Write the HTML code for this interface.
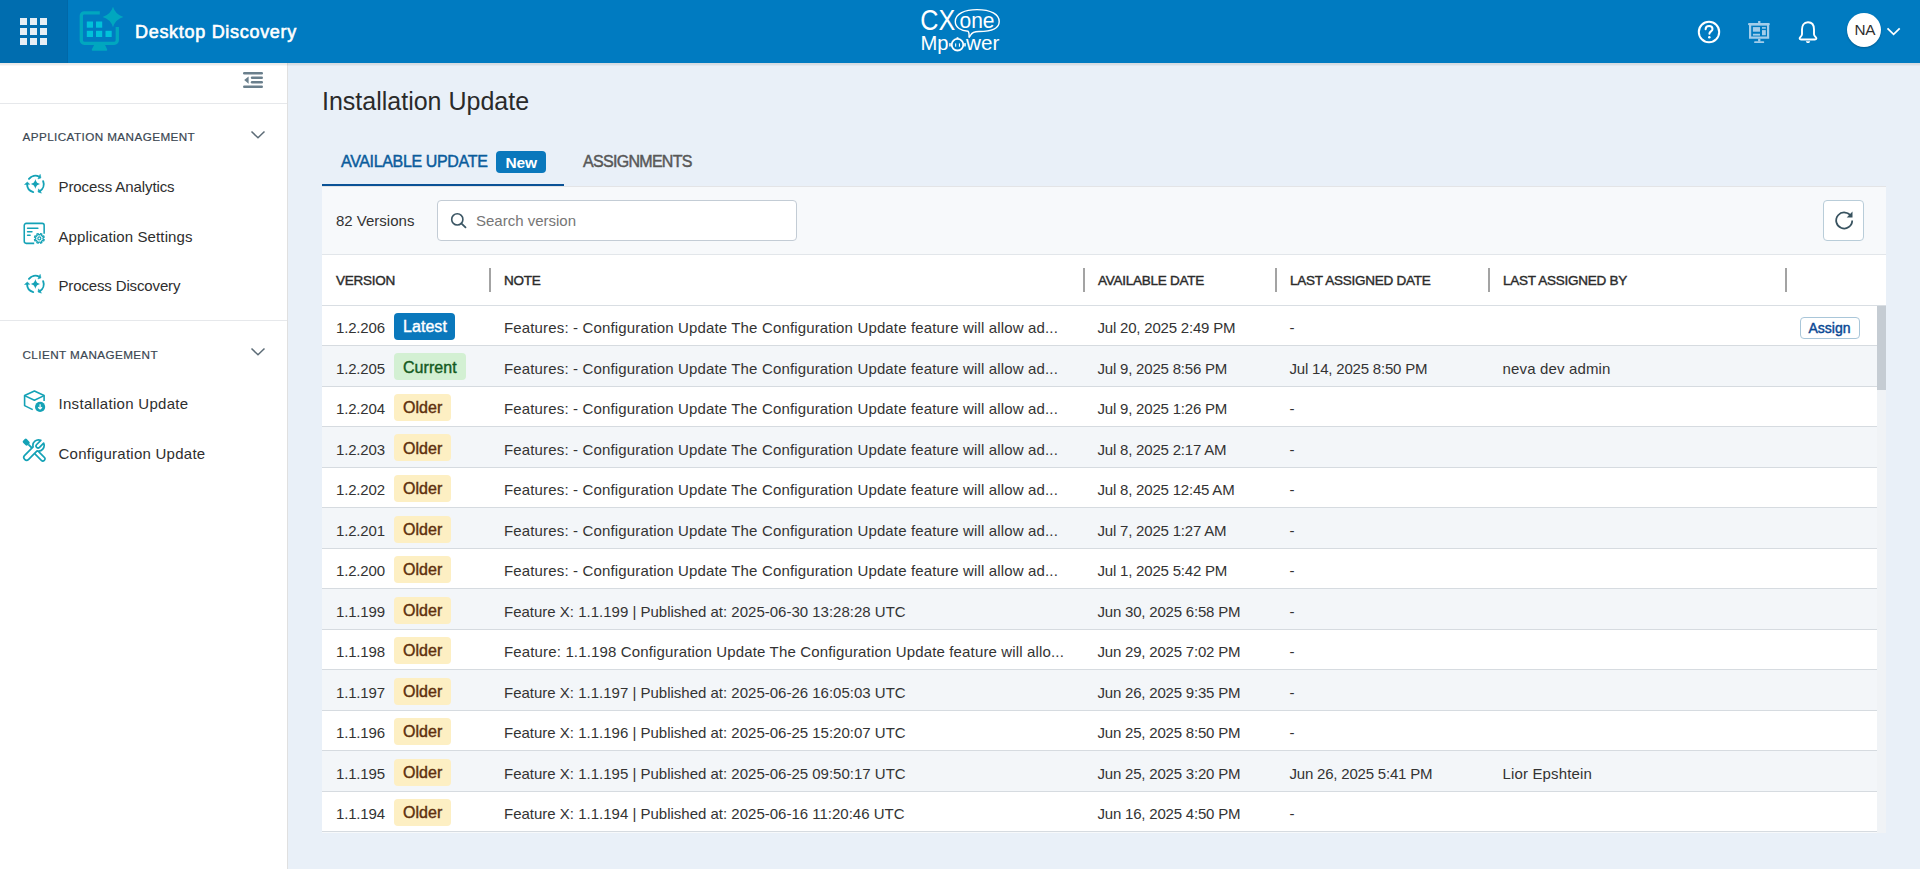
<!DOCTYPE html>
<html><head><meta charset="utf-8">
<style>
*{box-sizing:border-box;margin:0;padding:0}
html,body{width:1920px;height:869px;overflow:hidden;background:#e9f0f8;font-family:"Liberation Sans",sans-serif}
.a{position:absolute}
.t{position:absolute;white-space:nowrap}
</style></head><body>
<div class="a" style="left:0;top:0;width:1920px;height:63px;background:#007bc1;"></div>
<div class="a" style="left:0;top:0;width:68px;height:63px;background:#006daf;border-right:1px solid #0068a8"></div>
<div class="a" style="left:20px;top:18px;width:7px;height:7px;background:#e6eef5"></div>
<div class="a" style="left:30px;top:18px;width:7px;height:7px;background:#e6eef5"></div>
<div class="a" style="left:40px;top:18px;width:7px;height:7px;background:#e6eef5"></div>
<div class="a" style="left:20px;top:28px;width:7px;height:7px;background:#e6eef5"></div>
<div class="a" style="left:30px;top:28px;width:7px;height:7px;background:#e6eef5"></div>
<div class="a" style="left:40px;top:28px;width:7px;height:7px;background:#e6eef5"></div>
<div class="a" style="left:20px;top:38px;width:7px;height:7px;background:#e6eef5"></div>
<div class="a" style="left:30px;top:38px;width:7px;height:7px;background:#e6eef5"></div>
<div class="a" style="left:40px;top:38px;width:7px;height:7px;background:#e6eef5"></div>
<svg class="a" style="left:79px;top:6px" width="46" height="46" viewBox="0 0 46 46">
<path d="M20.8 6.8 H5.3 a3 3 0 0 0 -3 3 V34.3 a3 3 0 0 0 3 3 H35.3 a3 3 0 0 0 3 -3 V21" fill="none" stroke="#00a7bf" stroke-width="3.3"/>
<path d="M15.6 38 L12.8 43.6 a1 1 0 0 0 1 1.2 H27.2 a1 1 0 0 0 1 -1.2 L25.6 38Z" fill="#00a7bf"/>
<rect x="7.8" y="15.5" width="6.2" height="6.2" fill="#00c2d9"/>
<rect x="17" y="15.5" width="6.2" height="6.2" fill="#00c2d9"/>
<rect x="7.8" y="24.8" width="6.2" height="6.2" fill="#00c2d9"/>
<rect x="17" y="24.8" width="6.2" height="6.2" fill="#00c2d9"/>
<rect x="26.5" y="24.8" width="6.2" height="6.2" fill="#00c2d9"/>
<path d="M34 0.8 Q36.4 8.7 44.4 11 Q36.4 13.3 34 21.2 Q31.6 13.3 23.6 11 Q31.6 8.7 34 0.8Z" fill="#00a7bf"/>
</svg>
<div class="t" style="left:135px;top:21.26px;font-size:18px;line-height:23px;color:#ffffff;font-weight:400;letter-spacing:0.7px;-webkit-text-stroke:0.6px #fff">Desktop Discovery</div>
<svg class="a" style="left:915px;top:5px" width="92" height="52" viewBox="0 0 92 52">
<text x="5.2" y="25.2" font-family="Liberation Sans" font-size="29" fill="#fff" textLength="35" lengthAdjust="spacingAndGlyphs">CX</text>
<path d="M53 26.3 C46 25.8 40.3 22.5 40.3 16.5 C40.3 8.5 50 4.6 62 4.6 C76 4.6 84.2 9.5 84.2 16.5 C84.2 23.5 76 26.5 64 26.5 C60 26.5 57 27.3 55.5 30.3 L54 32.6 C54.2 30.3 54 27.3 53 26.3Z" fill="none" stroke="#fff" stroke-width="1.4"/>
<text x="44.5" y="23" font-family="Liberation Sans" font-size="21.5" fill="#fff" textLength="35" lengthAdjust="spacingAndGlyphs">one</text>
<text x="5.5" y="44.9" font-family="Liberation Sans" font-size="20.5" fill="#fff" textLength="28" lengthAdjust="spacingAndGlyphs">Mp</text>
<circle cx="42.5" cy="39.7" r="5.8" fill="none" stroke="#fff" stroke-width="1.8"/>
<rect x="34.2" y="38" width="1.6" height="3.6" rx=".6" fill="#fff"/>
<rect x="49.2" y="38" width="1.6" height="3.6" rx=".6" fill="#fff"/>
<rect x="41.6" y="32.2" width="1.8" height="1.8" fill="#fff"/>
<rect x="40.1" y="38.3" width="1.1" height="3.4" rx=".5" fill="#fff"/>
<rect x="43.9" y="38.3" width="1.1" height="3.4" rx=".5" fill="#fff"/>
<text x="51" y="44.9" font-family="Liberation Sans" font-size="20.5" fill="#fff" textLength="33.3" lengthAdjust="spacingAndGlyphs">wer</text>
</svg>
<svg class="a" style="left:1696px;top:19px" width="26" height="26" viewBox="0 0 26 26">
<circle cx="13" cy="13" r="10.2" fill="none" stroke="#fff" stroke-width="2"/>
<path d="M9.6 10.2 C9.6 8 11.2 6.9 13.1 6.9 C15 6.9 16.5 8.1 16.5 9.9 C16.5 12.3 13.4 12.4 13.4 14.8" fill="none" stroke="#fff" stroke-width="2" stroke-linecap="round"/>
<circle cx="13.3" cy="18.3" r="1.25" fill="#fff"/>
</svg>
<svg class="a" style="left:1746px;top:19px" width="26" height="26" viewBox="0 0 26 26">
<g fill="#a3cdea">
<rect x="12.1" y="2" width="2.3" height="2.4"/>
<rect x="2" y="4" width="21.8" height="2.2" rx="1"/>
<path fill-rule="evenodd" d="M3 6 H23.2 V19.8 H3Z M5.2 6.6 V17.6 H21 V6.6Z"/>
<rect x="6.9" y="8.1" width="7.1" height="4.6"/>
<rect x="6.9" y="14.75" width="7.1" height="1.85"/>
<rect x="16" y="8.1" width="3.8" height="1.6"/>
<rect x="16" y="11.1" width="3.8" height="5.1"/>
<rect x="12.1" y="19.8" width="2.3" height="2.8"/>
<rect x="8.1" y="22.2" width="10.1" height="1.9" rx=".9"/>
</g>
</svg>
<svg class="a" style="left:1795px;top:19px" width="26" height="26" viewBox="0 0 26 26">
<path d="M13 3.2 C8.6 3.2 7 6.8 7 10.4 V15.2 C7 17.2 4.6 18.2 4.6 19.3 C4.6 20.1 5.2 20.5 6 20.5 H20 C20.8 20.5 21.4 20.1 21.4 19.3 C21.4 18.2 19 17.2 19 15.2 V10.4 C19 6.8 17.4 3.2 13 3.2Z" fill="none" stroke="#fff" stroke-width="1.9" stroke-linejoin="round"/>
<path d="M10.8 22.2 C11.3 23.6 12.1 24.1 13 24.1 C13.9 24.1 14.7 23.6 15.2 22.2Z" fill="#fff"/>
</svg>
<div class="a" style="left:1847px;top:13px;width:34px;height:34px;border-radius:50%;background:#fff;box-shadow:0 1px 2px rgba(0,0,0,.25)"></div>
<div class="t" style="left:1854.5px;top:20.30px;font-size:15.3px;line-height:20px;color:#2e2e2e;font-weight:400;letter-spacing:-0.2px">NA</div>
<svg class="a" style="left:1886px;top:26px" width="16" height="12" viewBox="0 0 16 12">
<path d="M1.5 2.3 L7.6 8.4 L13.7 2.3" fill="none" stroke="#fff" stroke-width="1.7"/>
</svg>
<div class="a" style="left:0;top:63px;width:288px;height:806px;background:#fff;border-right:1px solid #e0e0e0"></div>
<div class="a" style="left:0;top:103px;width:287px;height:1px;background:#e6e8eb"></div>
<div class="a" style="left:0;top:63px;width:1920px;height:1px;background:rgba(70,45,30,.105)"></div><div class="a" style="left:0;top:64px;width:1920px;height:1px;background:rgba(0,0,0,.075)"></div><div class="a" style="left:0;top:65px;width:1920px;height:1px;background:rgba(0,0,0,.03)"></div>
<div class="a" style="left:0;top:320px;width:287px;height:1px;background:#e6e8eb"></div>
<svg class="a" style="left:243px;top:72px" width="21" height="17" viewBox="0 0 21 17">
<g fill="#6a7f8c">
<rect x="0" y="0" width="20" height="2.4" rx="1.2"/>
<rect x="7.8" y="4.5" width="12.2" height="2.4" rx="1.2"/>
<rect x="7.8" y="9.1" width="12.2" height="2.4" rx="1.2"/>
<rect x="0" y="13.6" width="20" height="2.4" rx="1.2"/>
<path d="M5.6 4.5 V11.8 L1.2 8.1Z"/>
</g>
</svg>
<div class="t" style="left:22.5px;top:129.45px;font-size:11.7px;line-height:15px;color:#3b4752;font-weight:400;letter-spacing:0.42px;-webkit-text-stroke:0.2px #3b4752">APPLICATION MANAGEMENT</div>
<div class="t" style="left:22.5px;top:346.85px;font-size:11.7px;line-height:15px;color:#3b4752;font-weight:400;letter-spacing:0.42px;-webkit-text-stroke:0.2px #3b4752">CLIENT MANAGEMENT</div>
<svg class="a" style="left:250px;top:130px" width="16" height="10" viewBox="0 0 16 10">
<path d="M1.5 1.5 L8 7.8 L14.5 1.5" fill="none" stroke="#5d6c77" stroke-width="1.5"/>
</svg>
<svg class="a" style="left:250px;top:347px" width="16" height="10" viewBox="0 0 16 10">
<path d="M1.5 1.5 L8 7.8 L14.5 1.5" fill="none" stroke="#5d6c77" stroke-width="1.5"/>
</svg>
<svg class="a" style="left:22px;top:172px" width="26" height="24" viewBox="0 0 26 24">
<path d="M6.95 6.88 A8.3 8.3 0 0 1 17.30 4.77" fill="none" stroke="#14a2b6" stroke-width="1.9" stroke-linecap="round"/>
<path d="M18.95 5.93 L15.90 6.98 L18.18 2.30Z" fill="#14a2b6" stroke="#14a2b6" stroke-width="0.5" stroke-linejoin="round"/>
<path d="M21.15 9.13 A8.3 8.3 0 0 1 17.80 19.14" fill="none" stroke="#14a2b6" stroke-width="1.9" stroke-linecap="round"/>
<path d="M15.96 19.99 L16.59 16.83 L19.50 21.14Z" fill="#14a2b6" stroke="#14a2b6" stroke-width="0.5" stroke-linejoin="round"/>
<path d="M11.25 20.12 A8.3 8.3 0 0 1 5.10 12.10" fill="none" stroke="#14a2b6" stroke-width="1.9" stroke-linecap="round"/>
<path d="M5.35 10.09 L7.70 12.30 L2.51 12.48Z" fill="#14a2b6" stroke="#14a2b6" stroke-width="0.5" stroke-linejoin="round"/>
<path d="M13.4 7.1 C14.25 10.40 15.10 11.25 18.4 12.1 C15.10 12.95 14.25 13.80 13.4 17.1 C12.55 13.80 11.70 12.95 8.4 12.1 C11.70 11.25 12.55 10.40 13.4 7.1Z" fill="#14a2b6"/>
</svg>
<div class="t" style="left:58.5px;top:176.50px;font-size:15px;line-height:20px;color:#2e2e2e;font-weight:400;letter-spacing:-0.09px">Process Analytics</div>
<svg class="a" style="left:22px;top:222px" width="24" height="24" viewBox="0 0 24 24">
<path d="M12.2 21.35 H4.25 a2 2 0 0 1 -2 -2 V3.35 a2 2 0 0 1 2 -2 H20.15 a2 2 0 0 1 2 2 V11.8" fill="none" stroke="#14a2b6" stroke-width="1.55"/>
<rect x="4.8" y="5.6" width="11.8" height="1.5" rx=".75" fill="#14a2b6"/>
<rect x="4.8" y="9" width="5.9" height="1.5" rx=".75" fill="#14a2b6"/>
<rect x="4.8" y="12.4" width="4.1" height="1.5" rx=".75" fill="#14a2b6"/>
<path d="M20.99 17.07 L22.19 17.65 L21.66 18.94 L20.40 18.50 L19.45 19.45 L19.89 20.71 L18.60 21.24 L18.02 20.04 L16.68 20.04 L16.10 21.24 L14.81 20.71 L15.25 19.45 L14.30 18.50 L13.04 18.94 L12.51 17.65 L13.71 17.07 L13.71 15.73 L12.51 15.15 L13.04 13.86 L14.30 14.30 L15.25 13.35 L14.81 12.09 L16.10 11.56 L16.68 12.76 L18.02 12.76 L18.60 11.56 L19.89 12.09 L19.45 13.35 L20.40 14.30 L21.66 13.86 L22.19 15.15 L20.99 15.73Z" fill="#fff" stroke="#14a2b6" stroke-width="1.3" stroke-linejoin="round"/>
<circle cx="17.35" cy="16.4" r="1.5" fill="none" stroke="#14a2b6" stroke-width="1.2"/>
</svg>
<div class="t" style="left:58.5px;top:226.80px;font-size:15px;line-height:20px;color:#2e2e2e;font-weight:400;letter-spacing:0.12px">Application Settings</div>
<svg class="a" style="left:22px;top:272px" width="26" height="24" viewBox="0 0 26 24">
<path d="M6.95 6.88 A8.3 8.3 0 0 1 17.30 4.77" fill="none" stroke="#14a2b6" stroke-width="1.9" stroke-linecap="round"/>
<path d="M18.95 5.93 L15.90 6.98 L18.18 2.30Z" fill="#14a2b6" stroke="#14a2b6" stroke-width="0.5" stroke-linejoin="round"/>
<path d="M21.15 9.13 A8.3 8.3 0 0 1 17.80 19.14" fill="none" stroke="#14a2b6" stroke-width="1.9" stroke-linecap="round"/>
<path d="M15.96 19.99 L16.59 16.83 L19.50 21.14Z" fill="#14a2b6" stroke="#14a2b6" stroke-width="0.5" stroke-linejoin="round"/>
<path d="M11.25 20.12 A8.3 8.3 0 0 1 5.10 12.10" fill="none" stroke="#14a2b6" stroke-width="1.9" stroke-linecap="round"/>
<path d="M5.35 10.09 L7.70 12.30 L2.51 12.48Z" fill="#14a2b6" stroke="#14a2b6" stroke-width="0.5" stroke-linejoin="round"/>
<path d="M13.4 7.1 C14.25 10.40 15.10 11.25 18.4 12.1 C15.10 12.95 14.25 13.80 13.4 17.1 C12.55 13.80 11.70 12.95 8.4 12.1 C11.70 11.25 12.55 10.40 13.4 7.1Z" fill="#14a2b6"/>
</svg>
<div class="t" style="left:58.5px;top:275.80px;font-size:15px;line-height:20px;color:#2e2e2e;font-weight:400;letter-spacing:-0.14px">Process Discovery</div>
<svg class="a" style="left:22px;top:389px" width="24" height="24" viewBox="0 0 24 24">
<path d="M10.7 20.6 L2.6 16.6 V6.6 L12.4 2.1 L22.1 6.6 V11.9" fill="none" stroke="#14a2b6" stroke-width="1.6" stroke-linejoin="round"/>
<path d="M2.6 6.6 L12.4 11.3 L22.1 6.6" fill="none" stroke="#14a2b6" stroke-width="1.6" stroke-linejoin="round"/>
<circle cx="18.1" cy="17.9" r="5.1" fill="#14a2b6"/>
<path d="M18.1 15.2 V19.6 M16.2 18.2 L18.1 19.9 L20 18.2" fill="none" stroke="#fff" stroke-width="1.2"/>
</svg>
<div class="t" style="left:58.5px;top:393.50px;font-size:15px;line-height:20px;color:#2e2e2e;font-weight:400;letter-spacing:0.3px">Installation Update</div>
<svg class="a" style="left:22px;top:438px" width="24" height="24" viewBox="0 0 24 24">
<g transform="rotate(45 12 12)">
<rect x="-2.2" y="9.4" width="6.4" height="5.2" rx="1.4" fill="#14a2b6"/>
<rect x="4" y="11.1" width="8" height="1.8" fill="#14a2b6"/>
<rect x="14" y="9.9" width="12.6" height="4.2" rx="2.1" fill="#fff" stroke="#14a2b6" stroke-width="1.6"/>
</g>
<g transform="rotate(-45 12 12)">
<path d="M1.6 9.2 L13.55 9.2 A5.6 5.6 0 0 1 23.63 10 L17.8 10 A2 2 0 0 0 17.8 14 L23.63 14 A5.6 5.6 0 0 1 13.55 14.8 L1.6 14.8 A2.8 2.8 0 0 1 1.6 9.2Z" fill="#fff" stroke="#14a2b6" stroke-width="1.7" stroke-linejoin="round"/>
</g>
</svg>
<div class="t" style="left:58.5px;top:443.80px;font-size:15px;line-height:20px;color:#2e2e2e;font-weight:400;letter-spacing:0.26px">Configuration Update</div>
<div class="t" style="left:322px;top:85.34px;font-size:25px;line-height:32px;color:#2a2a2a;font-weight:400;">Installation Update</div>
<div class="t" style="left:341px;top:150.96px;font-size:16px;line-height:21px;color:#0b5c9c;font-weight:400;letter-spacing:-0.35px;-webkit-text-stroke:0.45px #0b5c9c">AVAILABLE UPDATE</div>
<div class="a" style="left:496px;top:151px;width:50px;height:22px;border-radius:4px;background:#0a78bc"></div>
<div class="t" style="left:505.5px;top:152.83px;font-size:15.5px;line-height:20px;color:#ffffff;font-weight:700;letter-spacing:-0.1px">New</div>
<div class="t" style="left:583px;top:150.96px;font-size:16px;line-height:21px;color:#585858;font-weight:400;letter-spacing:-0.7px;-webkit-text-stroke:0.45px #585858">ASSIGNMENTS</div>
<div class="a" style="left:322px;top:186px;width:1564px;height:647px;background:#f7f9fb"></div>
<div class="a" style="left:322px;top:186px;width:1564px;height:1px;background:#e3e4e6"></div>
<div class="a" style="left:322px;top:183.6px;width:242px;height:2.4px;background:#0a5296"></div>
<div class="a" style="left:322px;top:254px;width:1564px;height:1px;background:#e2e6ea"></div>
<div class="t" style="left:336px;top:210.80px;font-size:15px;line-height:20px;color:#333;font-weight:400;">82 Versions</div>
<div class="a" style="left:437px;top:200px;width:360px;height:41px;border:1px solid #c3ccd5;border-radius:4px;background:#fff"></div>
<svg class="a" style="left:449px;top:211px" width="20" height="20" viewBox="0 0 20 20">
<circle cx="8.3" cy="8.4" r="5.6" fill="none" stroke="#3b5664" stroke-width="1.6"/>
<path d="M12.3 12.4 L16.5 16.4" stroke="#3b5664" stroke-width="1.8" stroke-linecap="round"/>
</svg>
<div class="t" style="left:476px;top:210.80px;font-size:15px;line-height:20px;color:#767676;font-weight:400;">Search version</div>
<div class="a" style="left:1823px;top:200px;width:41px;height:41px;border:1px solid #b9cdd9;border-radius:4px;background:#fff"></div>
<svg class="a" style="left:1832px;top:208px" width="24" height="24" viewBox="0 0 24 24">
<path d="M19.2 8.6 A8 8 0 1 0 20.2 12.5" fill="none" stroke="#38525f" stroke-width="1.75"/>
<path d="M20.5 3.6 V9.4 H14.7Z" fill="#38525f"/>
</svg>
<div class="a" style="left:322px;top:255px;width:1564px;height:50px;background:#fff"></div>
<div class="a" style="left:322px;top:305px;width:1564px;height:1px;background:#d9dee3"></div>
<div class="t" style="left:336px;top:271.52px;font-size:13.5px;line-height:18px;color:#2b2b2b;font-weight:400;letter-spacing:-0.25px;-webkit-text-stroke:0.4px #2b2b2b">VERSION</div>
<div class="t" style="left:504px;top:271.52px;font-size:13.5px;line-height:18px;color:#2b2b2b;font-weight:400;letter-spacing:-0.25px;-webkit-text-stroke:0.4px #2b2b2b">NOTE</div>
<div class="t" style="left:1098px;top:271.52px;font-size:13.5px;line-height:18px;color:#2b2b2b;font-weight:400;letter-spacing:-0.25px;-webkit-text-stroke:0.4px #2b2b2b">AVAILABLE DATE</div>
<div class="t" style="left:1290px;top:271.52px;font-size:13.5px;line-height:18px;color:#2b2b2b;font-weight:400;letter-spacing:-0.25px;-webkit-text-stroke:0.4px #2b2b2b">LAST ASSIGNED DATE</div>
<div class="t" style="left:1503px;top:271.52px;font-size:13.5px;line-height:18px;color:#2b2b2b;font-weight:400;letter-spacing:-0.25px;-webkit-text-stroke:0.4px #2b2b2b">LAST ASSIGNED BY</div>
<div class="a" style="left:489px;top:268px;width:2px;height:24px;background:#a3a3a3"></div>
<div class="a" style="left:1083px;top:268px;width:2px;height:24px;background:#a3a3a3"></div>
<div class="a" style="left:1275px;top:268px;width:2px;height:24px;background:#a3a3a3"></div>
<div class="a" style="left:1488px;top:268px;width:2px;height:24px;background:#a3a3a3"></div>
<div class="a" style="left:1785px;top:268px;width:2px;height:24px;background:#a3a3a3"></div>
<div class="a" style="left:322px;top:306px;width:1555px;height:39px;background:#ffffff"></div>
<div class="a" style="left:322px;top:345px;width:1555px;height:1px;background:#d6dbe0"></div>
<div class="t" style="left:336px;top:318.45px;font-size:15px;line-height:20px;color:#333;font-weight:400;letter-spacing:-0.17px">1.2.206</div>
<div class="a" style="left:394px;top:312.9px;width:61px;height:27px;border-radius:4px;background:#0a78bc"></div>
<div class="t" style="left:403px;top:316.01px;font-size:16px;line-height:21px;color:#ffffff;font-weight:400;letter-spacing:0.05px;-webkit-text-stroke:0.4px #ffffff">Latest</div>
<div class="t" style="left:504px;top:318.45px;font-size:15px;line-height:20px;color:#333;font-weight:400;letter-spacing:0.15px">Features: - Configuration Update The Configuration Update feature will allow ad...</div>
<div class="t" style="left:1097.5px;top:318.45px;font-size:15px;line-height:20px;color:#333;font-weight:400;letter-spacing:-0.2px">Jul 20, 2025 2:49 PM</div>
<div class="t" style="left:1289.5px;top:318.45px;font-size:15px;line-height:20px;color:#333;font-weight:400;letter-spacing:-0.2px">-</div>
<div class="a" style="left:1800px;top:316.8px;width:60px;height:22px;border:1px solid #a9c6d9;border-radius:4px;background:#fff"></div>
<div class="t" style="left:1808.5px;top:319.30px;font-size:14px;line-height:18px;color:#0a4894;font-weight:400;letter-spacing:0px;-webkit-text-stroke:0.45px #0a4894">Assign</div>
<div class="a" style="left:322px;top:346px;width:1555px;height:40px;background:#f3f6f9"></div>
<div class="a" style="left:322px;top:386px;width:1555px;height:1px;background:#d6dbe0"></div>
<div class="t" style="left:336px;top:358.95px;font-size:15px;line-height:20px;color:#333;font-weight:400;letter-spacing:-0.17px">1.2.205</div>
<div class="a" style="left:394px;top:353.4px;width:72px;height:27px;border-radius:4px;background:#d3f0d3"></div>
<div class="t" style="left:403px;top:356.51px;font-size:16px;line-height:21px;color:#145a1e;font-weight:400;letter-spacing:0.05px;-webkit-text-stroke:0.4px #145a1e">Current</div>
<div class="t" style="left:504px;top:358.95px;font-size:15px;line-height:20px;color:#333;font-weight:400;letter-spacing:0.15px">Features: - Configuration Update The Configuration Update feature will allow ad...</div>
<div class="t" style="left:1097.5px;top:358.95px;font-size:15px;line-height:20px;color:#333;font-weight:400;letter-spacing:-0.2px">Jul 9, 2025 8:56 PM</div>
<div class="t" style="left:1289.5px;top:358.95px;font-size:15px;line-height:20px;color:#333;font-weight:400;letter-spacing:-0.2px">Jul 14, 2025 8:50 PM</div>
<div class="t" style="left:1502.5px;top:358.95px;font-size:15px;line-height:20px;color:#333;font-weight:400;letter-spacing:0.15px">neva dev admin</div>
<div class="a" style="left:322px;top:387px;width:1555px;height:39px;background:#ffffff"></div>
<div class="a" style="left:322px;top:426px;width:1555px;height:1px;background:#d6dbe0"></div>
<div class="t" style="left:336px;top:399.45px;font-size:15px;line-height:20px;color:#333;font-weight:400;letter-spacing:-0.17px">1.2.204</div>
<div class="a" style="left:394px;top:393.9px;width:57px;height:27px;border-radius:4px;background:#fdefc3"></div>
<div class="t" style="left:403px;top:397.01px;font-size:16px;line-height:21px;color:#5e300e;font-weight:400;letter-spacing:0.05px;-webkit-text-stroke:0.4px #5e300e">Older</div>
<div class="t" style="left:504px;top:399.45px;font-size:15px;line-height:20px;color:#333;font-weight:400;letter-spacing:0.15px">Features: - Configuration Update The Configuration Update feature will allow ad...</div>
<div class="t" style="left:1097.5px;top:399.45px;font-size:15px;line-height:20px;color:#333;font-weight:400;letter-spacing:-0.2px">Jul 9, 2025 1:26 PM</div>
<div class="t" style="left:1289.5px;top:399.45px;font-size:15px;line-height:20px;color:#333;font-weight:400;letter-spacing:-0.2px">-</div>
<div class="a" style="left:322px;top:427px;width:1555px;height:40px;background:#f3f6f9"></div>
<div class="a" style="left:322px;top:467px;width:1555px;height:1px;background:#d6dbe0"></div>
<div class="t" style="left:336px;top:439.95px;font-size:15px;line-height:20px;color:#333;font-weight:400;letter-spacing:-0.17px">1.2.203</div>
<div class="a" style="left:394px;top:434.4px;width:57px;height:27px;border-radius:4px;background:#fdefc3"></div>
<div class="t" style="left:403px;top:437.51px;font-size:16px;line-height:21px;color:#5e300e;font-weight:400;letter-spacing:0.05px;-webkit-text-stroke:0.4px #5e300e">Older</div>
<div class="t" style="left:504px;top:439.95px;font-size:15px;line-height:20px;color:#333;font-weight:400;letter-spacing:0.15px">Features: - Configuration Update The Configuration Update feature will allow ad...</div>
<div class="t" style="left:1097.5px;top:439.95px;font-size:15px;line-height:20px;color:#333;font-weight:400;letter-spacing:-0.2px">Jul 8, 2025 2:17 AM</div>
<div class="t" style="left:1289.5px;top:439.95px;font-size:15px;line-height:20px;color:#333;font-weight:400;letter-spacing:-0.2px">-</div>
<div class="a" style="left:322px;top:468px;width:1555px;height:39px;background:#ffffff"></div>
<div class="a" style="left:322px;top:507px;width:1555px;height:1px;background:#d6dbe0"></div>
<div class="t" style="left:336px;top:480.45px;font-size:15px;line-height:20px;color:#333;font-weight:400;letter-spacing:-0.17px">1.2.202</div>
<div class="a" style="left:394px;top:474.9px;width:57px;height:27px;border-radius:4px;background:#fdefc3"></div>
<div class="t" style="left:403px;top:478.01px;font-size:16px;line-height:21px;color:#5e300e;font-weight:400;letter-spacing:0.05px;-webkit-text-stroke:0.4px #5e300e">Older</div>
<div class="t" style="left:504px;top:480.45px;font-size:15px;line-height:20px;color:#333;font-weight:400;letter-spacing:0.15px">Features: - Configuration Update The Configuration Update feature will allow ad...</div>
<div class="t" style="left:1097.5px;top:480.45px;font-size:15px;line-height:20px;color:#333;font-weight:400;letter-spacing:-0.2px">Jul 8, 2025 12:45 AM</div>
<div class="t" style="left:1289.5px;top:480.45px;font-size:15px;line-height:20px;color:#333;font-weight:400;letter-spacing:-0.2px">-</div>
<div class="a" style="left:322px;top:508px;width:1555px;height:40px;background:#f3f6f9"></div>
<div class="a" style="left:322px;top:548px;width:1555px;height:1px;background:#d6dbe0"></div>
<div class="t" style="left:336px;top:520.95px;font-size:15px;line-height:20px;color:#333;font-weight:400;letter-spacing:-0.17px">1.2.201</div>
<div class="a" style="left:394px;top:515.5px;width:57px;height:27px;border-radius:4px;background:#fdefc3"></div>
<div class="t" style="left:403px;top:518.51px;font-size:16px;line-height:21px;color:#5e300e;font-weight:400;letter-spacing:0.05px;-webkit-text-stroke:0.4px #5e300e">Older</div>
<div class="t" style="left:504px;top:520.95px;font-size:15px;line-height:20px;color:#333;font-weight:400;letter-spacing:0.15px">Features: - Configuration Update The Configuration Update feature will allow ad...</div>
<div class="t" style="left:1097.5px;top:520.95px;font-size:15px;line-height:20px;color:#333;font-weight:400;letter-spacing:-0.2px">Jul 7, 2025 1:27 AM</div>
<div class="t" style="left:1289.5px;top:520.95px;font-size:15px;line-height:20px;color:#333;font-weight:400;letter-spacing:-0.2px">-</div>
<div class="a" style="left:322px;top:549px;width:1555px;height:39px;background:#ffffff"></div>
<div class="a" style="left:322px;top:588px;width:1555px;height:1px;background:#d6dbe0"></div>
<div class="t" style="left:336px;top:561.45px;font-size:15px;line-height:20px;color:#333;font-weight:400;letter-spacing:-0.17px">1.2.200</div>
<div class="a" style="left:394px;top:556.0px;width:57px;height:27px;border-radius:4px;background:#fdefc3"></div>
<div class="t" style="left:403px;top:559.01px;font-size:16px;line-height:21px;color:#5e300e;font-weight:400;letter-spacing:0.05px;-webkit-text-stroke:0.4px #5e300e">Older</div>
<div class="t" style="left:504px;top:561.45px;font-size:15px;line-height:20px;color:#333;font-weight:400;letter-spacing:0.15px">Features: - Configuration Update The Configuration Update feature will allow ad...</div>
<div class="t" style="left:1097.5px;top:561.45px;font-size:15px;line-height:20px;color:#333;font-weight:400;letter-spacing:-0.2px">Jul 1, 2025 5:42 PM</div>
<div class="t" style="left:1289.5px;top:561.45px;font-size:15px;line-height:20px;color:#333;font-weight:400;letter-spacing:-0.2px">-</div>
<div class="a" style="left:322px;top:589px;width:1555px;height:40px;background:#f3f6f9"></div>
<div class="a" style="left:322px;top:629px;width:1555px;height:1px;background:#d6dbe0"></div>
<div class="t" style="left:336px;top:601.95px;font-size:15px;line-height:20px;color:#333;font-weight:400;letter-spacing:-0.17px">1.1.199</div>
<div class="a" style="left:394px;top:596.5px;width:57px;height:27px;border-radius:4px;background:#fdefc3"></div>
<div class="t" style="left:403px;top:599.51px;font-size:16px;line-height:21px;color:#5e300e;font-weight:400;letter-spacing:0.05px;-webkit-text-stroke:0.4px #5e300e">Older</div>
<div class="t" style="left:504px;top:601.95px;font-size:15px;line-height:20px;color:#333;font-weight:400;letter-spacing:0px">Feature X: 1.1.199 | Published at: 2025-06-30 13:28:28 UTC</div>
<div class="t" style="left:1097.5px;top:601.95px;font-size:15px;line-height:20px;color:#333;font-weight:400;letter-spacing:-0.2px">Jun 30, 2025 6:58 PM</div>
<div class="t" style="left:1289.5px;top:601.95px;font-size:15px;line-height:20px;color:#333;font-weight:400;letter-spacing:-0.2px">-</div>
<div class="a" style="left:322px;top:630px;width:1555px;height:39px;background:#ffffff"></div>
<div class="a" style="left:322px;top:669px;width:1555px;height:1px;background:#d6dbe0"></div>
<div class="t" style="left:336px;top:642.45px;font-size:15px;line-height:20px;color:#333;font-weight:400;letter-spacing:-0.17px">1.1.198</div>
<div class="a" style="left:394px;top:637.0px;width:57px;height:27px;border-radius:4px;background:#fdefc3"></div>
<div class="t" style="left:403px;top:640.01px;font-size:16px;line-height:21px;color:#5e300e;font-weight:400;letter-spacing:0.05px;-webkit-text-stroke:0.4px #5e300e">Older</div>
<div class="t" style="left:504px;top:642.45px;font-size:15px;line-height:20px;color:#333;font-weight:400;letter-spacing:0.15px">Feature: 1.1.198 Configuration Update The Configuration Update feature will allo...</div>
<div class="t" style="left:1097.5px;top:642.45px;font-size:15px;line-height:20px;color:#333;font-weight:400;letter-spacing:-0.2px">Jun 29, 2025 7:02 PM</div>
<div class="t" style="left:1289.5px;top:642.45px;font-size:15px;line-height:20px;color:#333;font-weight:400;letter-spacing:-0.2px">-</div>
<div class="a" style="left:322px;top:670px;width:1555px;height:40px;background:#f3f6f9"></div>
<div class="a" style="left:322px;top:710px;width:1555px;height:1px;background:#d6dbe0"></div>
<div class="t" style="left:336px;top:682.95px;font-size:15px;line-height:20px;color:#333;font-weight:400;letter-spacing:-0.17px">1.1.197</div>
<div class="a" style="left:394px;top:677.5px;width:57px;height:27px;border-radius:4px;background:#fdefc3"></div>
<div class="t" style="left:403px;top:680.51px;font-size:16px;line-height:21px;color:#5e300e;font-weight:400;letter-spacing:0.05px;-webkit-text-stroke:0.4px #5e300e">Older</div>
<div class="t" style="left:504px;top:682.95px;font-size:15px;line-height:20px;color:#333;font-weight:400;letter-spacing:0px">Feature X: 1.1.197 | Published at: 2025-06-26 16:05:03 UTC</div>
<div class="t" style="left:1097.5px;top:682.95px;font-size:15px;line-height:20px;color:#333;font-weight:400;letter-spacing:-0.2px">Jun 26, 2025 9:35 PM</div>
<div class="t" style="left:1289.5px;top:682.95px;font-size:15px;line-height:20px;color:#333;font-weight:400;letter-spacing:-0.2px">-</div>
<div class="a" style="left:322px;top:711px;width:1555px;height:39px;background:#ffffff"></div>
<div class="a" style="left:322px;top:750px;width:1555px;height:1px;background:#d6dbe0"></div>
<div class="t" style="left:336px;top:723.45px;font-size:15px;line-height:20px;color:#333;font-weight:400;letter-spacing:-0.17px">1.1.196</div>
<div class="a" style="left:394px;top:718.0px;width:57px;height:27px;border-radius:4px;background:#fdefc3"></div>
<div class="t" style="left:403px;top:721.01px;font-size:16px;line-height:21px;color:#5e300e;font-weight:400;letter-spacing:0.05px;-webkit-text-stroke:0.4px #5e300e">Older</div>
<div class="t" style="left:504px;top:723.45px;font-size:15px;line-height:20px;color:#333;font-weight:400;letter-spacing:0px">Feature X: 1.1.196 | Published at: 2025-06-25 15:20:07 UTC</div>
<div class="t" style="left:1097.5px;top:723.45px;font-size:15px;line-height:20px;color:#333;font-weight:400;letter-spacing:-0.2px">Jun 25, 2025 8:50 PM</div>
<div class="t" style="left:1289.5px;top:723.45px;font-size:15px;line-height:20px;color:#333;font-weight:400;letter-spacing:-0.2px">-</div>
<div class="a" style="left:322px;top:751px;width:1555px;height:40px;background:#f3f6f9"></div>
<div class="a" style="left:322px;top:791px;width:1555px;height:1px;background:#d6dbe0"></div>
<div class="t" style="left:336px;top:763.95px;font-size:15px;line-height:20px;color:#333;font-weight:400;letter-spacing:-0.17px">1.1.195</div>
<div class="a" style="left:394px;top:758.5px;width:57px;height:27px;border-radius:4px;background:#fdefc3"></div>
<div class="t" style="left:403px;top:761.51px;font-size:16px;line-height:21px;color:#5e300e;font-weight:400;letter-spacing:0.05px;-webkit-text-stroke:0.4px #5e300e">Older</div>
<div class="t" style="left:504px;top:763.95px;font-size:15px;line-height:20px;color:#333;font-weight:400;letter-spacing:0px">Feature X: 1.1.195 | Published at: 2025-06-25 09:50:17 UTC</div>
<div class="t" style="left:1097.5px;top:763.95px;font-size:15px;line-height:20px;color:#333;font-weight:400;letter-spacing:-0.2px">Jun 25, 2025 3:20 PM</div>
<div class="t" style="left:1289.5px;top:763.95px;font-size:15px;line-height:20px;color:#333;font-weight:400;letter-spacing:-0.2px">Jun 26, 2025 5:41 PM</div>
<div class="t" style="left:1502.5px;top:763.95px;font-size:15px;line-height:20px;color:#333;font-weight:400;letter-spacing:0.15px">Lior Epshtein</div>
<div class="a" style="left:322px;top:792px;width:1555px;height:39px;background:#ffffff"></div>
<div class="a" style="left:322px;top:831px;width:1555px;height:1px;background:#d6dbe0"></div>
<div class="t" style="left:336px;top:804.45px;font-size:15px;line-height:20px;color:#333;font-weight:400;letter-spacing:-0.17px">1.1.194</div>
<div class="a" style="left:394px;top:799.0px;width:57px;height:27px;border-radius:4px;background:#fdefc3"></div>
<div class="t" style="left:403px;top:802.01px;font-size:16px;line-height:21px;color:#5e300e;font-weight:400;letter-spacing:0.05px;-webkit-text-stroke:0.4px #5e300e">Older</div>
<div class="t" style="left:504px;top:804.45px;font-size:15px;line-height:20px;color:#333;font-weight:400;letter-spacing:0px">Feature X: 1.1.194 | Published at: 2025-06-16 11:20:46 UTC</div>
<div class="t" style="left:1097.5px;top:804.45px;font-size:15px;line-height:20px;color:#333;font-weight:400;letter-spacing:-0.2px">Jun 16, 2025 4:50 PM</div>
<div class="t" style="left:1289.5px;top:804.45px;font-size:15px;line-height:20px;color:#333;font-weight:400;letter-spacing:-0.2px">-</div>
<div class="a" style="left:1877px;top:306px;width:9px;height:527px;background:#f0f3f6"></div>
<div class="a" style="left:1877px;top:306px;width:9px;height:84px;background:#c5ccd3"></div>
</body></html>
